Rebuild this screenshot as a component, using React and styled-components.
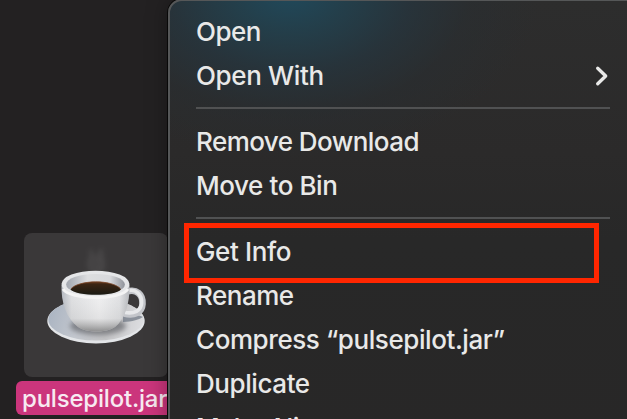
import React from "react";
import styled, { createGlobalStyle } from "styled-components";

const GlobalStyle = createGlobalStyle`
  * { box-sizing: border-box; }
  body { margin: 0; background: #232122; overflow: hidden; }
`;

const Desktop = styled.main`
  position: relative;
  display: flex;
  align-items: flex-end;
  width: 627px;
  height: 419px;
  overflow: hidden;
  padding: 0 0 4px 16px;
  background: #232122;
  font-family: Inter, "Liberation Sans", sans-serif;
`;

const FileItem = styled.div`
  display: flex;
  flex-direction: column;
  align-items: center;
  gap: 4px;
  width: 160px;
`;

const FileTile = styled.div`
  width: 144px;
  height: 144px;
  border-radius: 8px;
  background: #3a3839;
`;

const FileName = styled.div`
  width: 160px;
  height: 34px;
  padding-left: 6px;
  border-radius: 6px;
  background: #cb357c;
  color: #f7eaf1;
  font-size: 24px;
  font-weight: 500;
  line-height: 35px;
  letter-spacing: -0.2px;
  white-space: nowrap;
`;

const Menu = styled.nav`
  position: absolute;
  top: -1px;
  left: 168px;
  width: 480px;
  height: 440px;
  padding: 9px 0 0 26px;
  border: 2px solid #555758;
  border-radius: 14px;
  background:
    radial-gradient(ellipse 250px 165px at 120px -8px, #20495b 0%, rgba(34, 66, 80, 0.85) 22%, rgba(37, 54, 64, 0.7) 48%, rgba(40, 46, 50, 0.5) 72%, rgba(41, 41, 41, 0) 100%),
    linear-gradient(#2d2d2d, #2b2a2a 35%, #282828 55%, #282727);
  box-shadow: 0 0 0 1px #080808, 0 0 22px rgba(0, 0, 0, 0.35);
`;

const MenuItem = styled.div`
  display: flex;
  align-items: center;
  justify-content: space-between;
  width: 414px;
  height: 44px;
  color: #e9e9e8;
  font-size: 26px;
  font-weight: 500;
  line-height: 44px;
  letter-spacing: ${(p) => p.$tracking ?? -0.42}px;
  white-space: nowrap;
`;

const Separator = styled.div`
  width: 414px;
  height: 2px;
  margin: 9px 0 11px;
  background: #505152;
`;

const Highlight = styled.div`
  position: absolute;
  left: 184px;
  top: 223px;
  width: 415px;
  height: 60px;
  border: 5px solid #ff2600;
`;

const Chevron = () => (
  <svg width="16" height="24" viewBox="0 0 16 24" fill="none">
    <path d="M3.7 4.2 L11.7 12 L3.7 19.8" stroke="#e9e9e8" strokeWidth="3.3" strokeLinecap="round" strokeLinejoin="round" />
  </svg>
);

const CoffeeCup = () => (
  <svg width="144" height="144" viewBox="0 0 144 144" fill="none">
    <defs>
      <linearGradient id="saucer" x1="24" y1="75" x2="116" y2="105" gradientUnits="userSpaceOnUse">
        <stop stopColor="#a9b3c1" />
        <stop offset=".35" stopColor="#c3c7ce" />
        <stop offset=".65" stopColor="#c3c3c5" />
        <stop offset="1" stopColor="#dedfe2" />
      </linearGradient>
      <linearGradient id="cup" x1="38" y1="0" x2="106" y2="0" gradientUnits="userSpaceOnUse">
        <stop stopColor="#b8bcc3" />
        <stop offset=".14" stopColor="#dedfe1" />
        <stop offset=".55" stopColor="#efeff0" />
        <stop offset=".85" stopColor="#e0e1e3" />
        <stop offset="1" stopColor="#b5b7bb" />
      </linearGradient>
      <linearGradient id="cupShade" x1="0" y1="65" x2="0" y2="99" gradientUnits="userSpaceOnUse">
        <stop stopColor="#888" stopOpacity="0" />
        <stop offset=".6" stopColor="#777" stopOpacity=".1" />
        <stop offset="1" stopColor="#555" stopOpacity=".65" />
      </linearGradient>
      <linearGradient id="inside" x1="44" y1="0" x2="100" y2="0" gradientUnits="userSpaceOnUse">
        <stop stopColor="#a7abb3" />
        <stop offset=".35" stopColor="#dcdddf" />
        <stop offset=".75" stopColor="#d8d9dc" />
        <stop offset="1" stopColor="#94979e" />
      </linearGradient>
      <linearGradient id="coffee" x1="0" y1="48" x2="0" y2="62" gradientUnits="userSpaceOnUse">
        <stop stopColor="#6b3c20" />
        <stop offset=".25" stopColor="#3b2514" />
        <stop offset="1" stopColor="#191a13" />
      </linearGradient>
      <filter id="soft" x="-60%" y="-50%" width="220%" height="200%">
        <feGaussianBlur stdDeviation="2.4" />
      </filter>
    </defs>
    <g filter="url(#soft)" stroke="#aaa" strokeLinecap="round">
      <path d="M67 37 C61 30 70 24 67 18" strokeWidth="4" opacity=".12" />
      <path d="M77 37 C82 30 75 24 77 18" strokeWidth="5" opacity=".12" />
      <path d="M72 37 L72 26" strokeWidth="8" opacity=".1" />
    </g>
    <ellipse cx="72" cy="88" rx="48.7" ry="22.4" fill="#e3e5e8" />
    <ellipse cx="72" cy="86.5" rx="47.7" ry="21" fill="url(#saucer)" />
    <ellipse cx="74" cy="93" rx="28" ry="9" fill="#55565b" opacity=".6" filter="url(#soft)" />
    <path d="M99 83 C107 83 112 81 119 84 C116 86 108 89 99 89 Z" fill="#646d7b" opacity=".65" />
    <path d="M102 59 C113 55 119 62 118.5 71 C118 80 110 83 100 80.5" stroke="#c3c5ca" strokeWidth="6.6" />
    <path d="M103 58 C112 55 118 62 117.6 70 C117 78 110 81 101 79.5" stroke="#e7e8ea" strokeWidth="3.6" />
    <path d="M37.5 52 C37 69 42 85 54 94 C63 100 82 100 91 94 C101 86 106 70 105.5 52 Z" fill="url(#cup)" />
    <path d="M37.5 52 C37 69 42 85 54 94 C63 100 82 100 91 94 C101 86 106 70 105.5 52 Z" fill="url(#cupShade)" />
    <ellipse cx="71.5" cy="51" rx="34" ry="13.3" fill="#e5e6e8" />
    <ellipse cx="71.5" cy="51.5" rx="29.4" ry="10.5" fill="url(#inside)" />
    <path d="M46.5 56.5 C54 46.5 89 46 97 56.5 C91 63.5 53 63.5 46.5 56.5 Z" fill="url(#coffee)" />
    <path d="M47 55.8 C55 46.8 88 46.3 96.5 55.8" stroke="#7b4424" strokeWidth=".8" />
    <path d="M39 56 C46 67 96 68 104 56" stroke="#f4f4f4" strokeWidth="3" />
  </svg>
);

export default function App() {
  return (
    <>
      <GlobalStyle />
      <Desktop>
        <FileItem>
          <FileTile><CoffeeCup /></FileTile>
          <FileName>pulsepilot.jar</FileName>
        </FileItem>
        <Menu>
          <MenuItem $tracking={-0.5}>Open</MenuItem>
          <MenuItem $tracking={-0.35}>Open With <Chevron /></MenuItem>
          <Separator />
          <MenuItem $tracking={-0.56}>Remove Download</MenuItem>
          <MenuItem>Move to Bin</MenuItem>
          <Separator />
          <MenuItem $tracking={-0.36}>Get Info</MenuItem>
          <MenuItem $tracking={-0.5}>Rename</MenuItem>
          <MenuItem>Compress “pulsepilot.jar”</MenuItem>
          <MenuItem>Duplicate</MenuItem>
          <MenuItem>Make Alias</MenuItem>
        </Menu>
        <Highlight />
      </Desktop>
    </>
  );
}
